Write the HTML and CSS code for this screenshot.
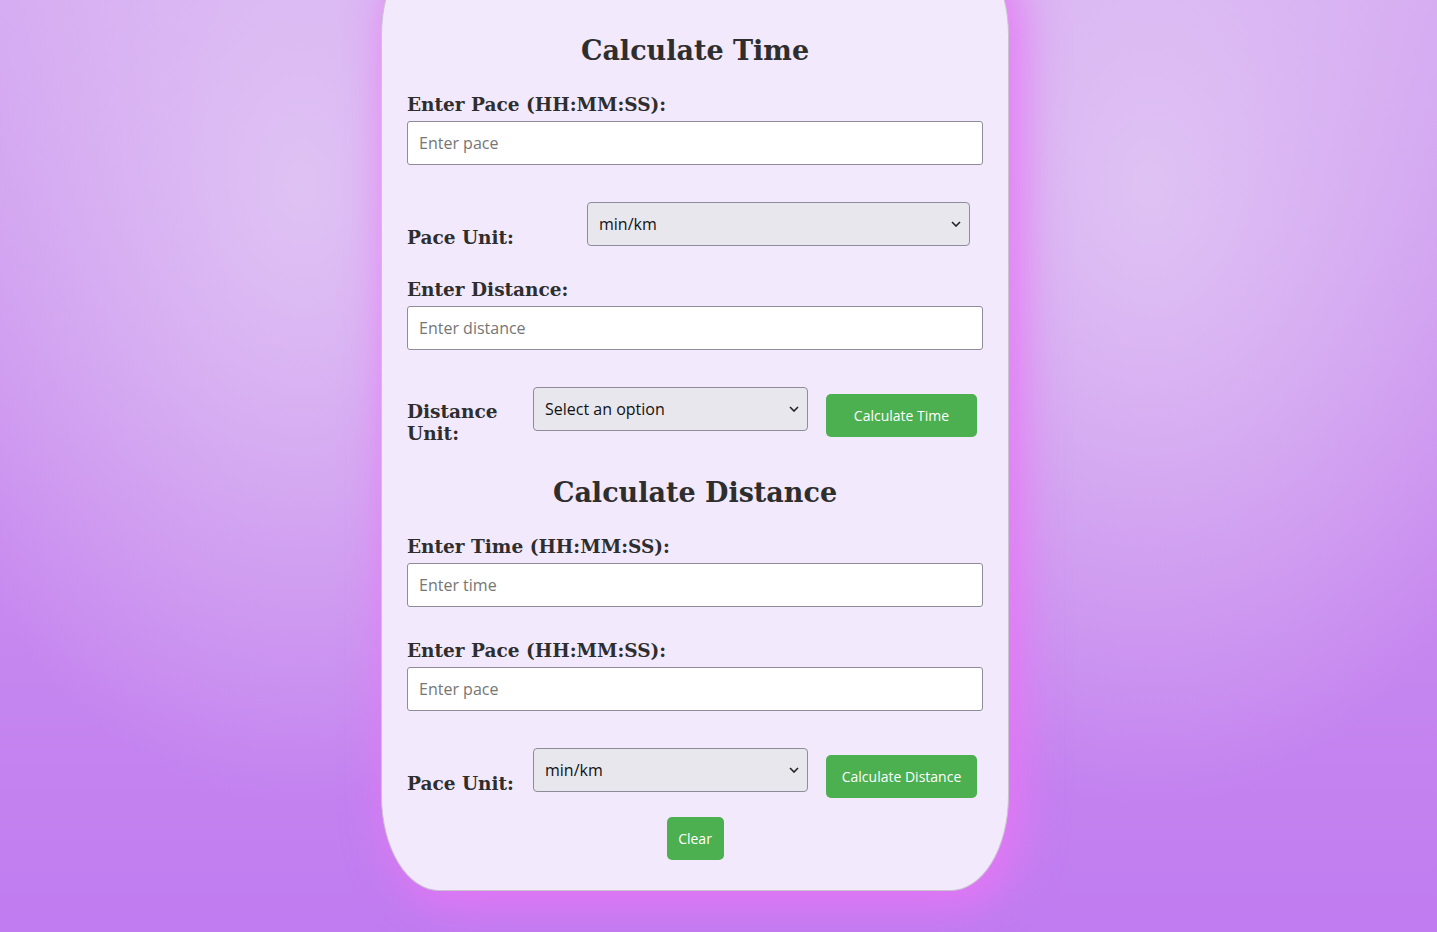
FILE: index.html
```html
<!DOCTYPE html>
<html lang="en">
<head>
<meta charset="utf-8">
<title>Pace Calculator</title>
<link rel="stylesheet" href="styles.css">
</head>
<body>
<main class="card">
  <h2 class="title">Calculate Time</h2>
  <label class="field-label" for="pace1">Enter Pace (HH:MM:SS):</label>
  <input class="text-input" id="pace1" type="text" placeholder="Enter pace">

  <div class="unit-row">
    <label class="unit-label unit-label-wide" for="unit1">Pace Unit:</label>
    <select class="unit-select unit-select-wide" id="unit1">
      <option>min/km</option>
      <option>min/mile</option>
    </select>
  </div>

  <label class="field-label field-label-gap" for="dist1">Enter Distance:</label>
  <input class="text-input" id="dist1" type="text" placeholder="Enter distance">

  <div class="unit-row">
    <label class="unit-label unit-label-two" for="unit2">Distance Unit:</label>
    <select class="unit-select" id="unit2">
      <option>Select an option</option>
      <option>km</option>
      <option>mile</option>
    </select>
    <button class="btn btn-calc" type="button">Calculate Time</button>
  </div>

  <h2 class="title title-second">Calculate Distance</h2>
  <label class="field-label" for="time2">Enter Time (HH:MM:SS):</label>
  <input class="text-input" id="time2" type="text" placeholder="Enter time">

  <label class="field-label field-label-gap2" for="pace2">Enter Pace (HH:MM:SS):</label>
  <input class="text-input" id="pace2" type="text" placeholder="Enter pace">

  <div class="unit-row">
    <label class="unit-label" for="unit3">Pace Unit:</label>
    <select class="unit-select" id="unit3">
      <option>min/km</option>
      <option>min/mile</option>
    </select>
    <button class="btn btn-calc" type="button">Calculate Distance</button>
  </div>

  <div class="clear-wrap">
    <button class="btn btn-clear" type="button">Clear</button>
  </div>
</main>
</body>
</html>
```

FILE: styles.css
```css
* {
  box-sizing: border-box;
}

html, body {
  margin: 0;
  padding: 0;
}

body {
  min-height: 100vh;
  overflow: hidden;
  display: flex;
  justify-content: center;
  align-items: flex-start;
  padding-right: 47px;
  font-family: "DejaVu Serif", Georgia, serif;
  color: #333;
  background:
    radial-gradient(ellipse 420px 620px at 21% 20%, rgba(224, 196, 244, 0.95), rgba(224, 196, 244, 0) 100%),
    radial-gradient(ellipse 420px 620px at 80% 20%, rgba(224, 196, 244, 0.95), rgba(224, 196, 244, 0) 100%),
    linear-gradient(180deg, #d3a6f1 0%, #c98cef 55%, #c07cf0 100%);
}

.card {
  width: 628px;
  margin-top: -60px;
  padding: 90px 25px 30px;
  background: #f3e9fc;
  border: 1px solid #c9c2cf;
  border-radius: 58px / 95px;
  box-shadow: 10px 10px 40px 6px rgba(232, 118, 246, 0.85);
}

.title {
  margin: 0;
  font-size: 27px;
  line-height: 40px;
  font-weight: bold;
  text-align: center;
  color: #2e2e2e;
}

.title-second {
  margin-top: 28px;
}

.field-label {
  display: block;
  margin-top: 22px;
  font-size: 18.5px;
  line-height: 24px;
  font-weight: bold;
  color: #2e2e2e;
}

.field-label-gap {
  margin-top: 28px;
}

.field-label-gap2 {
  margin-top: 32px;
}

.text-input {
  display: block;
  width: 576px;
  height: 44px;
  margin-top: 4px;
  padding: 0 11px;
  border: 1px solid #8f8c99;
  border-radius: 3px;
  background: #fff;
  font-family: "Open Sans", "Noto Sans", sans-serif;
  font-size: 16px;
  color: #222;
}

.text-input::placeholder {
  color: #767676;
}

.unit-row {
  display: flex;
  align-items: flex-start;
  margin-top: 37px;
}

.unit-label {
  flex: 0 0 126px;
  margin-top: 24px;
  font-size: 18.5px;
  line-height: 24px;
  font-weight: bold;
  color: #2e2e2e;
}

.unit-label-wide {
  flex-basis: 180px;
}

.unit-label-two {
  margin-top: 14px;
  line-height: 22px;
  padding-right: 30px;
}

.unit-select {
  flex: 0 0 275px;
  height: 44px;
  padding: 0 26px 0 11px;
  -webkit-appearance: none;
  appearance: none;
  border: 1px solid #8f8c99;
  border-radius: 4px;
  background-color: #e9e7ee;
  background-image: url("data:image/svg+xml,%3Csvg xmlns='http://www.w3.org/2000/svg' width='10' height='6' viewBox='0 0 10 6'%3E%3Cpath d='M1 1 L5 5 L9 1' fill='none' stroke='%23222' stroke-width='1.6'/%3E%3C/svg%3E");
  background-repeat: no-repeat;
  background-position: right 8px center;
  font-family: "Open Sans", "Noto Sans", sans-serif;
  font-size: 16px;
  color: #111;
}

.unit-select-wide {
  flex-basis: 383px;
}

.btn {
  height: 43px;
  border: none;
  border-radius: 5px;
  background: #4caf50;
  color: #fff;
  font-family: "Open Sans", "Noto Sans", sans-serif;
  font-size: 14px;
  cursor: pointer;
}

.btn-calc {
  flex: 0 0 151px;
  margin-top: 7px;
  margin-left: 18px;
}

.clear-wrap {
  display: flex;
  justify-content: center;
  margin-top: 19px;
}

.btn-clear {
  width: 57px;
  padding: 0;
}
```
